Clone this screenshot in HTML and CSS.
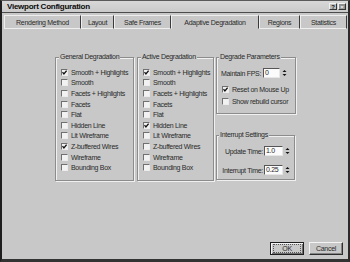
FILE: index.html
```html
<!DOCTYPE html>
<html>
<head>
<meta charset="utf-8">
<link rel="stylesheet" href="styles.css">
</head>
<body>
<div class="window">
  <div class="titlebar">
    <span class="title">Viewport Configuration</span>
    <div class="tbtns"><span class="tbtn help">?</span><span class="tbtn close">×</span></div>
  </div>
  <div class="tabs">
    <div class="tab">Rendering Method</div>
    <div class="tab">Layout</div>
    <div class="tab">Safe Frames</div>
    <div class="tab active">Adaptive Degradation</div>
    <div class="tab">Regions</div>
    <div class="tab">Statistics</div>
  </div>
  <div class="panel">
    <div class="groups">
      <div class="group g1">
        <div class="gtitle">General Degradation</div>
        <div class="cbrow"><span class="cb"><svg class="tick" viewBox="0 0 5 5" width="5" height="5"><path d="M0.5 2.2 L1.9 3.9 L4.6 0.6" fill="none" stroke="#111" stroke-width="1.3"/></svg></span><span>Smooth + Highlights</span></div>
        <div class="cbrow"><span class="cb"></span><span>Smooth</span></div>
        <div class="cbrow"><span class="cb"></span><span>Facets + Highlights</span></div>
        <div class="cbrow"><span class="cb"></span><span>Facets</span></div>
        <div class="cbrow"><span class="cb"></span><span>Flat</span></div>
        <div class="cbrow"><span class="cb"></span><span>Hidden Line</span></div>
        <div class="cbrow"><span class="cb"></span><span>Lit Wireframe</span></div>
        <div class="cbrow"><span class="cb"><svg class="tick" viewBox="0 0 5 5" width="5" height="5"><path d="M0.5 2.2 L1.9 3.9 L4.6 0.6" fill="none" stroke="#111" stroke-width="1.3"/></svg></span><span>Z-buffered Wires</span></div>
        <div class="cbrow"><span class="cb"></span><span>Wireframe</span></div>
        <div class="cbrow"><span class="cb"></span><span>Bounding Box</span></div>
      </div>
      <div class="group g2">
        <div class="gtitle">Active Degradation</div>
        <div class="cbrow"><span class="cb"><svg class="tick" viewBox="0 0 5 5" width="5" height="5"><path d="M0.5 2.2 L1.9 3.9 L4.6 0.6" fill="none" stroke="#111" stroke-width="1.3"/></svg></span><span>Smooth + Highlights</span></div>
        <div class="cbrow"><span class="cb"></span><span>Smooth</span></div>
        <div class="cbrow"><span class="cb"></span><span>Facets + Highlights</span></div>
        <div class="cbrow"><span class="cb"></span><span>Facets</span></div>
        <div class="cbrow"><span class="cb"></span><span>Flat</span></div>
        <div class="cbrow"><span class="cb"><svg class="tick" viewBox="0 0 5 5" width="5" height="5"><path d="M0.5 2.2 L1.9 3.9 L4.6 0.6" fill="none" stroke="#111" stroke-width="1.3"/></svg></span><span>Hidden Line</span></div>
        <div class="cbrow"><span class="cb"></span><span>Lit Wireframe</span></div>
        <div class="cbrow"><span class="cb"></span><span>Z-buffered Wires</span></div>
        <div class="cbrow"><span class="cb"></span><span>Wireframe</span></div>
        <div class="cbrow"><span class="cb"></span><span>Bounding Box</span></div>
      </div>
      <div class="col3">
        <div class="group g3">
          <div class="gtitle">Degrade Parameters</div>
          <div class="srow fps">
            <span class="slabel">Maintain FPS:</span>
            <span class="spinner"><span class="field">0</span><svg class="arrows" viewBox="0 0 7 10" width="7" height="10"><path d="M3.5 2 L1.5 4 L5.5 4 Z M1.5 6 L5.5 6 L3.5 8 Z" fill="#111"/></svg></span>
          </div>
          <div class="cbrow deg first"><span class="cb"><svg class="tick" viewBox="0 0 5 5" width="5" height="5"><path d="M0.5 2.2 L1.9 3.9 L4.6 0.6" fill="none" stroke="#111" stroke-width="1.3"/></svg></span><span>Reset on Mouse Up</span></div>
          <div class="cbrow deg"><span class="cb"></span><span>Show rebuild cursor</span></div>
        </div>
        <div class="group g4">
          <div class="gtitle">Interrupt Settings</div>
          <div class="srow right">
            <span class="slabel">Update Time:</span>
            <span class="spinner"><span class="field wide">1.0</span><svg class="arrows" viewBox="0 0 7 10" width="7" height="10"><path d="M3.5 2 L1.5 4 L5.5 4 Z M1.5 6 L5.5 6 L3.5 8 Z" fill="#111"/></svg></span>
          </div>
          <div class="srow right second">
            <span class="slabel">Interrupt Time:</span>
            <span class="spinner"><span class="field wide">0.25</span><svg class="arrows" viewBox="0 0 7 10" width="7" height="10"><path d="M3.5 2 L1.5 4 L5.5 4 Z M1.5 6 L5.5 6 L3.5 8 Z" fill="#111"/></svg></span>
          </div>
        </div>
      </div>
    </div>
    <div class="actions">
      <button class="btn default"><span class="focus">OK</span></button>
      <button class="btn">Cancel</button>
    </div>
  </div>
</div>
</body>
</html>
```
FILE: styles.css
```css
* { box-sizing: border-box; }
html, body { margin: 0; padding: 0; }
body {
  width: 350px;
  height: 262px;
  overflow: hidden;
  background: #c8c8c8;
  font-family: "Liberation Sans", Arial, sans-serif;
  font-size: 7px;
  letter-spacing: -0.3px;
  color: #2a2a2a;
}
.window {
  display: flex;
  flex-direction: column;
  height: 262px;
  background: #c8c8c8;
  border-top: 1px solid #5a5a5a;
  border-left: 2px solid #1e1e1e;
  border-right: 2px solid #2a2a2a;
  border-bottom: 3px solid #333;
}
.titlebar {
  height: 12px;
  display: flex;
  align-items: center;
  justify-content: space-between;
  padding: 0 2px 0 5px;
  background: linear-gradient(#d8d8d8, #cacaca);
  border-bottom: 1px solid #4c4c4c;
}
.title {
  font-weight: bold;
  font-size: 8px;
  letter-spacing: -0.25px;
  color: #0a0a0a;
}
.tbtns { display: flex; gap: 1px; }
.tbtn {
  width: 8px;
  height: 7px;
  display: flex;
  align-items: center;
  justify-content: center;
  font-size: 6px;
  font-weight: bold;
  line-height: 1;
  letter-spacing: 0;
  border: 1px solid;
  border-color: #f0f0f0 #333 #333 #f0f0f0;
  background: #bdbdbd;
  color: #111;
}
.tbtn.close { background: #8e8e8e; color: #f4f4f4; }
.tabs {
  display: grid;
  grid-template-columns: 77px 33px 57px 88px 41px 47px;
  height: 14px;
  margin: 2px 0 0 2px;
}
.tab {
  display: flex;
  align-items: center;
  justify-content: center;
  border-top: 1px solid #eeeeee;
  border-left: 1px solid #eeeeee;
  border-right: 1px solid #3a3a3a;
  border-bottom: 1px solid #eeeeee;
  white-space: nowrap;
}
.tab.active { border-bottom-color: transparent; }
.panel {
  flex: 1;
  display: flex;
  flex-direction: column;
  padding: 28px 5px 4px 53px;
}
.groups { display: flex; align-items: flex-start; }
.group {
  border: 1px solid #8c8c8c;
  box-shadow: inset 1px 1px 0 #f0f0f0, 1px 1px 0 #f0f0f0;
  padding: 0 3px 7px 5px;
}
.g1 { width: 79px; }
.g2 { width: 77px; margin-left: 3px; }
.col3 { width: 80px; margin-left: 2px; display: flex; flex-direction: column; }
.g3 { padding: 0 3px 5px 4px; }
.g4 { margin-top: 21px; margin-right: 1px; padding: 0 3px 3px 4px; }
.gtitle {
  display: table;
  margin: -5px 0 6px -2px;
  padding: 0 1px;
  line-height: 8px;
  background: #c8c8c8;
  white-space: nowrap;
}
.cbrow {
  height: 10.6px;
  display: flex;
  align-items: center;
  gap: 3px;
  white-space: nowrap;
}
.cbrow.deg { height: 12.6px; margin-left: 1px; }
.cbrow.deg.first { margin-top: 4px; }
.cb {
  flex: none;
  width: 7px;
  height: 7px;
  display: flex;
  align-items: center;
  justify-content: center;
  border: 1px solid;
  border-color: #707070 #ececec #ececec #707070;
  background: #f2f2f2;
}
.tick { display: block; }
.srow {
  height: 12px;
  display: flex;
  align-items: center;
  white-space: nowrap;
}
.srow.fps .spinner { margin-left: auto; margin-right: 4px; }
.srow.right { justify-content: flex-end; }
.srow.right .slabel { margin-right: 1px; }
.srow.second { margin-top: 7px; }
.spinner { display: flex; align-items: center; gap: 1px; }
.field {
  width: 17px;
  height: 10px;
  line-height: 8px;
  padding-left: 1px;
  background: #fbfbfb;
  border: 1px solid;
  border-color: #555 #e6e6e6 #e6e6e6 #555;
}
.field.wide { width: 19px; }
.arrows { display: block; }
.actions {
  margin-top: auto;
  display: flex;
  justify-content: flex-end;
  gap: 5px;
}
.btn {
  width: 34px;
  height: 13px;
  padding: 0;
  font: inherit;
  line-height: 1;
  letter-spacing: inherit;
  color: #2a2a2a;
  background: #c8c8c8;
  border: 1px solid;
  border-color: #f4f4f4 #2e2e2e #2e2e2e #f4f4f4;
  box-shadow: inset -1px -1px 0 #848484;
  display: flex;
  align-items: center;
  justify-content: center;
}
.btn.default {
  border-color: #1e1e1e;
  box-shadow: inset 1px 1px 0 #f4f4f4, inset -1px -1px 0 #6e6e6e;
  padding: 1px 2px;
}
.focus {
  flex: 1;
  align-self: stretch;
  display: flex;
  align-items: center;
  justify-content: center;
  line-height: 1;
  border: 1px dotted #555;
}
```
